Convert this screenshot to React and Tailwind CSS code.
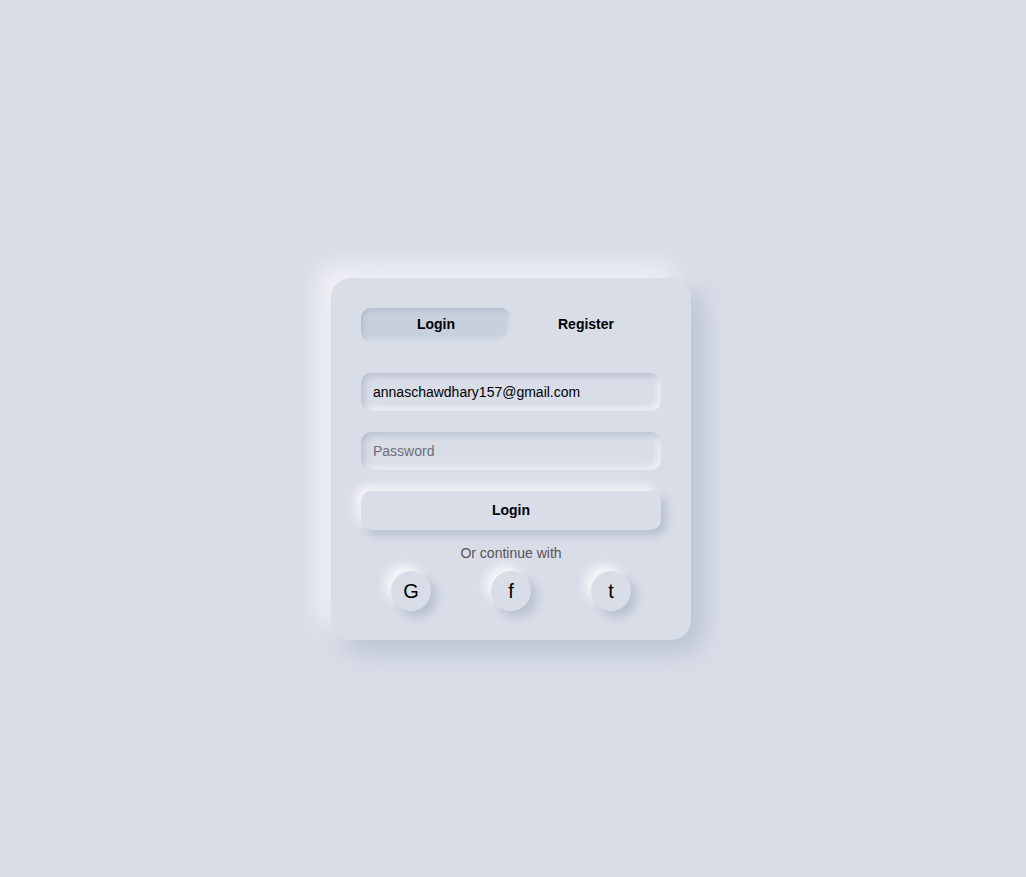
import React, { useState } from "react";

const font = { fontFamily: '"Liberation Sans", Arial, sans-serif' };

const SocialButton = ({ label }) => (
  <button className="w-10 h-10 rounded-full bg-[#d9dde8] text-[20px] text-black flex items-center justify-center shadow-[6px_6px_10px_rgba(163,172,190,0.6),-6px_-6px_10px_rgba(255,255,255,0.75)]">
    {label}
  </button>
);

export default function App() {
  const [tab, setTab] = useState("login");

  return (
    <div
      className="min-h-screen bg-[#d9dde8] flex items-center justify-center pt-[40px] pr-[4px]"
      style={font}
    >
      <div className="w-[360px] rounded-[20px] bg-[#d9dde8] px-[30px] pt-[30px] pb-[29px] shadow-[12px_12px_24px_rgba(163,172,190,0.55),-12px_-12px_24px_rgba(255,255,255,0.7)]">
        <div className="flex">
          <button
            onClick={() => setTab("login")}
            className={
              tab === "login"
                ? "w-[150px] h-[34px] rounded-[10px] bg-[#c9d0dd] text-[14px] font-bold text-black shadow-[inset_2px_2px_5px_rgba(160,170,190,0.6),inset_-2px_-2px_5px_rgba(255,255,255,0.5)]"
                : "w-[150px] h-[34px] rounded-[10px] text-[14px] font-bold text-black"
            }
          >
            Login
          </button>
          <button
            onClick={() => setTab("register")}
            className={
              tab === "register"
                ? "w-[150px] h-[34px] rounded-[10px] bg-[#c9d0dd] text-[14px] font-bold text-black shadow-[inset_2px_2px_5px_rgba(160,170,190,0.6),inset_-2px_-2px_5px_rgba(255,255,255,0.5)]"
                : "w-[150px] h-[34px] rounded-[10px] text-[14px] font-bold text-black"
            }
          >
            Register
          </button>
        </div>

        <div className="mt-[31px] flex flex-col gap-[21px]">
          <input
            type="email"
            defaultValue="annaschawdhary157@gmail.com"
            className="w-full h-[38px] rounded-[10px] bg-[#d9dde8] px-3 text-[14px] text-black outline-none shadow-[inset_3px_3px_6px_rgba(163,172,190,0.6),inset_-3px_-3px_6px_rgba(255,255,255,0.7)]"
          />
          <input
            type="password"
            placeholder="Password"
            className="w-full h-[38px] rounded-[10px] bg-[#d9dde8] px-3 text-[14px] text-black placeholder:text-[#6b6e75] outline-none shadow-[inset_3px_3px_6px_rgba(163,172,190,0.6),inset_-3px_-3px_6px_rgba(255,255,255,0.7)]"
          />
        </div>

        <button className="mt-[21px] w-full h-[39px] rounded-[10px] bg-[#d9dde8] text-[14px] font-bold text-black shadow-[5px_5px_10px_rgba(163,172,190,0.65),-5px_-5px_10px_rgba(255,255,255,0.8)]">
          Login
        </button>

        <p className="mt-[13px] text-center text-[14px] text-[#555]">
          Or continue with
        </p>

        <div className="mt-[7px] flex justify-center gap-[60px]">
          <SocialButton label="G" />
          <SocialButton label="f" />
          <SocialButton label="t" />
        </div>
      </div>
    </div>
  );
}
